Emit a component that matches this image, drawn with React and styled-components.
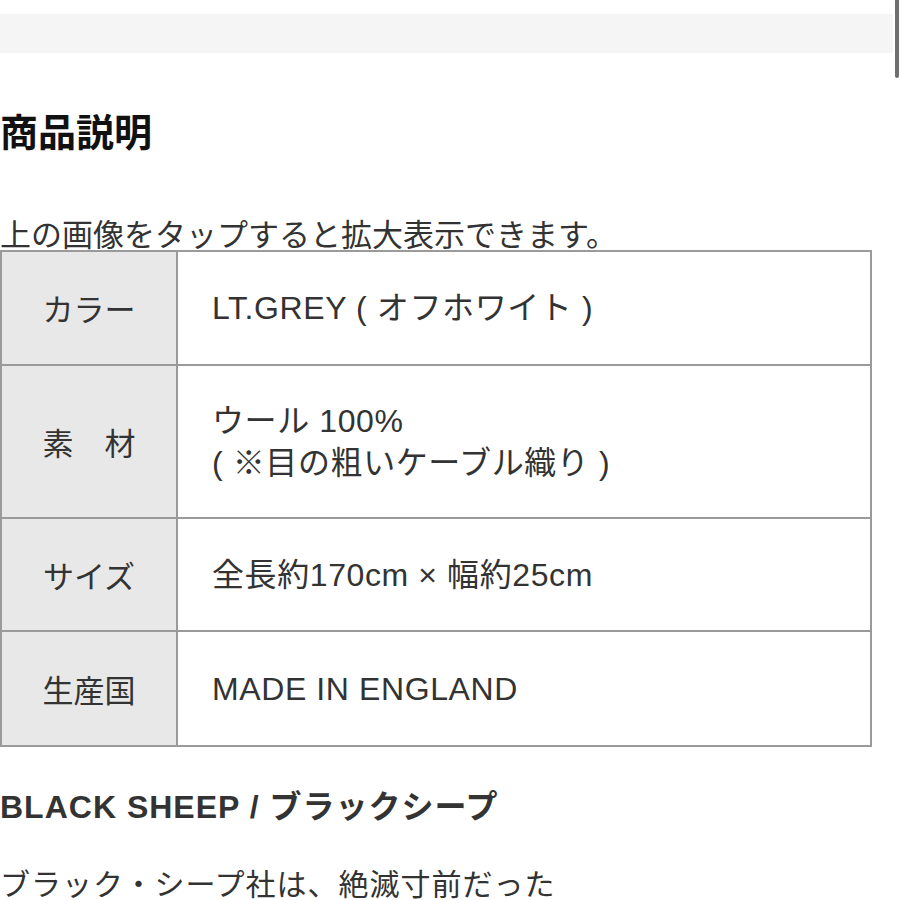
import React from 'react';
import styled, { createGlobalStyle } from 'styled-components';

const GlobalStyle = createGlobalStyle`
  html, body {
    margin: 0;
    padding: 0;
    background: #fff;
  }
  body {
    font-family: "Liberation Sans", "Noto Sans CJK JP", sans-serif;
    color: #333;
    overflow: hidden;
  }
`;

const Page = styled.div`
  width: 900px;
  height: 900px;
  overflow: hidden;
  position: relative;
`;

const ScrollThumb = styled.div`
  position: absolute;
  top: 0;
  right: 1px;
  width: 4px;
  height: 78px;
  border-radius: 0 0 3px 3px;
  background: #6e6e6e;
`;

const SearchBar = styled.div`
  margin: 14px 7px 0 0;
  height: 39px;
  background: #f5f5f5;
`;

const Heading = styled.h2`
  margin: 55px 0 0;
  font-family: "Noto Sans CJK JP", sans-serif;
  font-size: 38px;
  font-weight: 700;
  line-height: 44px;
  color: #111;
`;

const Caption = styled.p`
  margin: 64px 0 0;
  font-family: "Noto Sans CJK JP", sans-serif;
  font-size: 31px;
  line-height: 34px;
  color: #333;
  white-space: nowrap;
`;

const SpecTable = styled.table`
  width: 872px;
  margin-top: 0;
  border-collapse: collapse;
  line-height: 42px;
  color: #333;
`;

const Label = styled.th`
  width: 174px;
  padding: 0;
  height: ${(p) => p.$h}px;
  border: 2px solid #9a9a9a;
  background: #e8e8e8;
  font-family: "Noto Sans CJK JP", sans-serif;
  font-size: 31px;
  font-weight: 400;
  text-align: center;
`;

const Value = styled.td`
  padding: 0 0 0 34px;
  border: 2px solid #9a9a9a;
  background: #fff;
  font-size: 32px;
  letter-spacing: 0.6px;
  text-align: left;
  white-space: nowrap;
`;

const Brand = styled.h3`
  margin: 40px 0 0;
  font-size: 32px;
  font-weight: 700;
  line-height: 40px;
  color: #333;
  letter-spacing: 1px;
`;

const Body = styled.p`
  margin: 38px 0 0;
  font-family: "Noto Sans CJK JP", sans-serif;
  font-size: 30px;
  line-height: 34px;
  letter-spacing: 1px;
  color: #333;
  white-space: nowrap;
`;

const rows = [
  { label: 'カラー', h: 112, lines: ['LT.GREY ( オフホワイト )'] },
  { label: '素　材', h: 151, lines: ['ウール 100%', '( ※目の粗いケーブル織り )'] },
  { label: 'サイズ', h: 111, lines: ['全長約170cm × 幅約25cm'] },
  { label: '生産国', h: 113, lines: ['MADE IN ENGLAND'] },
];

export default function App() {
  return (
    <Page>
      <GlobalStyle />
      <ScrollThumb />
      <SearchBar />
      <Heading>商品説明</Heading>
      <Caption>上の画像をタップすると拡大表示できます。</Caption>
      <SpecTable>
        <tbody>
          {rows.map((r) => (
            <tr key={r.label}>
              <Label $h={r.h}>{r.label}</Label>
              <Value>
                {r.lines.map((l, i) => (
                  <div key={i}>{l}</div>
                ))}
              </Value>
            </tr>
          ))}
        </tbody>
      </SpecTable>
      <Brand>BLACK SHEEP / ブラックシープ</Brand>
      <Body>ブラック・シープ社は、絶滅寸前だった</Body>
    </Page>
  );
}
